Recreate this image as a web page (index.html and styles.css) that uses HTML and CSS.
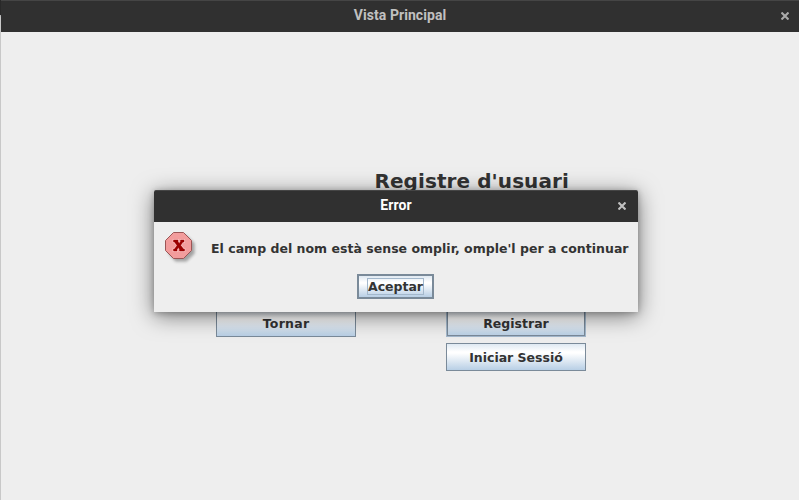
FILE: index.html
```html
<!DOCTYPE html>
<html lang="ca">
<head>
<meta charset="utf-8">
<title>Vista Principal</title>
<link rel="stylesheet" href="styles.css">
</head>
<body>
<div class="desktop">
  <div class="edge"></div>
  <main class="window">
    <header class="titlebar">
      <span class="title">Vista Principal</span>
      <svg class="close" width="8" height="8" viewBox="0 0 8 8"><path d="M.5 .5L7.500 7.500M7.500 .5L.5 7.500"/></svg>
    </header>
    <section class="content">
      <h1 class="heading">Registre d'usuari</h1>
      <div class="actions">
        <button class="button button-back">Tornar</button>
        <button class="button button-default">Registrar</button>
        <button class="button button-login">Iniciar Sessió</button>
      </div>
    </section>
  </main>
  <div class="dialog" role="alertdialog">
    <header class="titlebar dialog-titlebar">
      <span class="title">Error</span>
      <svg class="close" width="8" height="8" viewBox="0 0 8 8"><path d="M.5 .5L7.500 7.500M7.500 .5L.5 7.500"/></svg>
    </header>
    <div class="message-row">
      <svg class="error-icon" width="32" height="32" viewBox="0 0 32 32">
        <path class="icon-shadow" d="M10.500 3.500H21.500L29.500 11.500V21.500L21.500 29.500H10.500L3.500 21.500V11.500Z"/>
        <path class="icon-body" d="M8.500 .5H18.500L26.500 8.500V18.500L18.500 26.500H8.500L.5 18.500V8.500Z"/>
        <path class="icon-halo" d="M8.500 8H13V9.500L14.200 11.500L15.500 9.500V8H19V10H18L15.700 13.300L18.500 17H19.500V19H14.500V17.500L13.500 15.500L12 17.500V19H8.500V17H9.500L12 13.500L9.500 10H8.500Z"/>
        <path class="icon-cross" d="M8.500 8H13V9.500L14.200 11.500L15.500 9.500V8H19V10H18L15.700 13.300L18.500 17H19.500V19H14.500V17.500L13.500 15.500L12 17.500V19H8.500V17H9.500L12 13.500L9.500 10H8.500Z"/>
      </svg>
      <p class="message">El camp del nom està sense omplir, omple'l per a continuar</p>
    </div>
    <button class="button accept"><span class="focus">Aceptar</span></button>
  </div>
</div>
</body>
</html>
```
FILE: styles.css
```css
* { box-sizing: border-box; }
body { margin: 0; overflow: hidden; }
.desktop {
  position: relative;
  display: flex;
  width: 799px;
  height: 500px;
  background: #eee;
  color: #333;
  font-family: "DejaVu Sans", sans-serif;
}
.edge {
  width: 1px;
  background: linear-gradient(#292929 15px, #aaa 15px, #c8c8c8 17px);
}
.window { flex: 1; display: flex; flex-direction: column; }
.titlebar {
  display: flex;
  align-items: center;
  justify-content: center;
  height: 32px;
  padding-bottom: 3px;
  background: #303030;
  border-top: 1px solid #454545;
  color: #c0c0c0;
  font: bold 14px/18px Roboto, sans-serif;
  letter-spacing: .07px;
  position: relative;
}
.close {
  position: absolute;
  top: 11px;
  right: 10px;
  fill: none;
  stroke: #aaa;
  stroke-width: 2.1;
}
.content { display: flex; flex-direction: column; padding-top: 137px; }
.heading {
  margin: 0 0 116px 373.5px;
  font-size: 20px;
  line-height: 24px;
  letter-spacing: .08px;
  white-space: nowrap;
}
.actions {
  display: grid;
  grid-template-columns: 140px 140px;
  column-gap: 90px;
  row-gap: 6px;
  margin-left: 215px;
}
.button {
  height: 28px;
  padding: 0;
  border: 1px solid #7a8a99;
  background: linear-gradient(#dfe9f2, #fff 30%, #fff 35%, #b8cfe5);
  color: #333;
  font: bold 12.5px/15px "DejaVu Sans", sans-serif;
}
.button-back { letter-spacing: .25px; }
.button-default {
  border-color: #a3b8cc;
  box-shadow: inset 0 0 0 1px #7a8a99;
}
.button-login { grid-column: 2; }
.dialog {
  position: absolute;
  left: 154px;
  top: 190px;
  width: 484px;
  height: 122px;
  background: #eee;
  border-radius: 2px 2px 0 0;
  box-shadow: 0 4px 22px rgba(0,0,0,.5), 0 1px 6px rgba(0,0,0,.25);
}
.dialog-titlebar { color: #fff; border-radius: 2px 2px 0 0; }
.dialog .close { top: 11px; right: 12px; stroke: #c0c0c0; }
.message-row { display: flex; height: 52px; padding: 10px 0 0 11px; }
.error-icon { overflow: visible; }
.icon-shadow { fill: #777; opacity: .65; filter: blur(1.5px); }
.icon-body { fill: #f29c9c; stroke: #9b5555; }
.icon-halo { fill: none; stroke: #ffcaca; stroke-width: 1.6; }
.icon-cross { fill: #9b0000; stroke: #9b0000; stroke-width: .4; }
.message {
  margin: 9px 0 0 14px;
  font-size: 12.5px;
  font-weight: bold;
  line-height: 15px;
  letter-spacing: .015px;
  white-space: nowrap;
}
.accept {
  display: flex;
  align-items: center;
  justify-content: center;
  width: 77px;
  height: 25px;
  margin-left: 203px;
  border-width: 2px;
}
.focus { height: 17px; border: 1px solid #a3b8cc; line-height: 15px; }
```
